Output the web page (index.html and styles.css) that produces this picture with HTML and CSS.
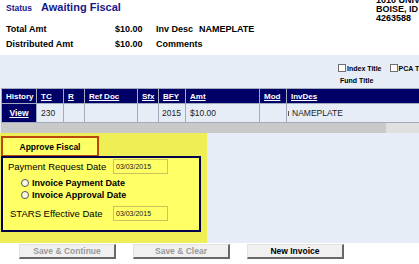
FILE: index.html
```html
<!DOCTYPE html>
<html>
<head>
<meta charset="utf-8">
<link rel="stylesheet" href="styles.css">
</head>
<body>
<div class="top">
  <div class="summary">
    <div class="status"><span class="status-label">Status</span><span class="status-value">Awaiting Fiscal</span></div>
    <div class="info">
      <span>Total Amt</span><span>$10.00</span><span>Inv Desc</span><span>NAMEPLATE</span>
      <span>Distributed Amt</span><span>$10.00</span><span>Comments</span><span></span>
    </div>
  </div>
  <div class="address">1010 UNIVERSITY DR<br>BOISE, ID 83725<br>4263588</div>
</div>
<div class="main">
  <div class="options">
    <div class="checks">
      <label class="check"><span class="cb"></span>Index Title</label>
      <label class="check"><span class="cb"></span>PCA Title</label>
    </div>
    <div class="fund">Fund Title</div>
  </div>
  <table class="grid">
    <colgroup>
      <col style="width:35px"><col style="width:27px"><col style="width:21px"><col style="width:53px"><col style="width:21px"><col style="width:27px"><col style="width:74px"><col style="width:27px"><col style="width:150px">
    </colgroup>
    <tr>
      <th>History</th><th><a href="#">TC</a></th><th><a href="#">R</a></th><th><a href="#">Ref Doc</a></th><th><a href="#">Sfx</a></th><th><a href="#">BFY</a></th><th><a href="#">Amt</a></th><th><a href="#">Mod</a></th><th><a href="#">InvDes</a></th>
    </tr>
    <tr>
      <td class="view"><a href="#">View</a></td><td>230</td><td></td><td></td><td></td><td class="num">2015</td><td>$10.00</td><td></td><td class="desc"><span class="mark"></span>NAMEPLATE</td>
    </tr>
  </table>
  <div class="scroll"><div class="thumb"></div></div>
  <div class="panel">
    <div class="tab">Approve Fiscal</div>
    <div class="box">
      <div class="field first"><span>Payment Request Date</span><input class="date" type="text" value="03/03/2015"></div>
      <label class="radio"><input type="radio" name="d"><span>Invoice Payment Date</span></label>
      <label class="radio"><input type="radio" name="d"><span>Invoice Approval Date</span></label>
      <div class="field last"><span>STARS Effective Date</span><input class="date" type="text" value="03/03/2015"></div>
    </div>
  </div>
</div>
<div class="buttons">
  <button class="btn" disabled>Save &amp; Continue</button>
  <button class="btn" disabled>Save &amp; Clear</button>
  <button class="btn">New Invoice</button>
</div>
</body>
</html>
```
FILE: styles.css
```css
html, body { margin: 0; padding: 0; overflow: hidden; background: #fff; }
body { font-family: "Liberation Sans", Arial, sans-serif; color: #000; width: 419px; height: 264px; }

.top { display: flex; height: 55px; }
.summary { flex: 0 0 376px; padding-left: 6px; box-sizing: border-box; }
.status { display: flex; align-items: baseline; gap: 9px; height: 15px; line-height: 15px; color: #16168a; font-weight: bold; }
.status-label { font-size: 8.5px; }
.status-value { font-size: 11px; }
.info { display: grid; grid-template-columns: 109px 41px 43px auto; margin-top: 7px; font-size: 9px; font-weight: bold; line-height: 15px; white-space: nowrap; }
.address { margin-top: -4px; font-size: 9px; font-weight: bold; line-height: 9px; white-space: nowrap; }

.main { background: #e6edf7; }
.options { margin-left: 338px; padding-top: 8px; padding-bottom: 2px; font-size: 7px; font-weight: bold; white-space: nowrap; }
.checks { display: flex; gap: 8px; height: 10px; align-items: center; }
.check { display: flex; align-items: center; gap: 1px; }
.cb { width: 8px; height: 8px; box-sizing: border-box; border: 1px solid #6f6f6f; background: #fff; }
.fund { margin-top: 3px; line-height: 10px; padding-left: 2px; }

.grid { border-collapse: collapse; table-layout: fixed; width: 435px; margin-left: 1px; }
.grid th, .grid td { border: 1px solid #a3abbf; padding: 0 0 0 4px; text-align: left; white-space: nowrap; overflow: hidden; }
.grid th { background: #000066; color: #fff; font-weight: bold; font-size: 8px; height: 14px; }
.grid th a { color: #fff; }
.grid td { background: #e6edf7; height: 18px; font-size: 8.5px; color: #222; }
.grid td.view { background: #000066; text-align: center; padding: 0; font-weight: bold; }
.grid td.view a { color: #fff; }
.grid td.num { text-align: right; padding: 0 4px 0 0; }
.grid td.desc { padding-left: 1px; }
.mark { display: inline-block; width: 1px; height: 5px; background: #555; margin-right: 3px; vertical-align: middle; }

.scroll { height: 10px; background: #e0e0e0; margin-left: 1px; }
.thumb { width: 385px; height: 100%; background: #c9c9c9; }

.panel { width: 207px; box-sizing: border-box; background: #eeee55; padding: 3px 6px 11px 1px; margin-bottom: -7px; }
.tab { width: 98px; height: 20px; box-sizing: border-box; border: 2px solid #b9470e; border-bottom-width: 1px; background: #ffff66; font-size: 8.5px; font-weight: bold; display: flex; align-items: center; justify-content: center; }
.box { border: 2px solid #00004d; background: #ffff66; padding: 1px 0 9px 0; }
.field { display: grid; align-items: center; font-size: 9.5px; }
.field.first { grid-template-columns: 105px 55px; padding-left: 5px; }
.field.last { grid-template-columns: 103px 55px; padding-left: 7px; margin-top: 5px; }
.date { width: 55px; height: 15px; box-sizing: border-box; margin: 0; border: 1px solid #cbc35e; background: #ffff66; font: 7px "Liberation Sans", Arial, sans-serif; color: #222; padding: 0 0 0 2px; }
.radio { display: flex; align-items: center; height: 12px; padding-left: 18px; font-size: 9px; font-weight: bold; }
.radio:first-of-type { margin-top: 3px; }
.radio input { appearance: none; -webkit-appearance: none; width: 8px; height: 8px; margin: 0 3px 0 0; border: 1px solid #555; border-radius: 50%; background: #fbfbe8; box-sizing: border-box; }

.buttons { display: flex; gap: 17px; padding-left: 19px; margin-top: 8px; }
.btn { width: 97px; height: 15px; box-sizing: border-box; background: #f0f0f0; border-style: solid; border-width: 1px 2px 2px 1px; border-color: #e2e2e2 #686868 #686868 #e2e2e2; font: bold 8.5px "Liberation Sans", Arial, sans-serif; color: #000; padding: 0; }
.btn:disabled { color: #9a9a9a; }
```
